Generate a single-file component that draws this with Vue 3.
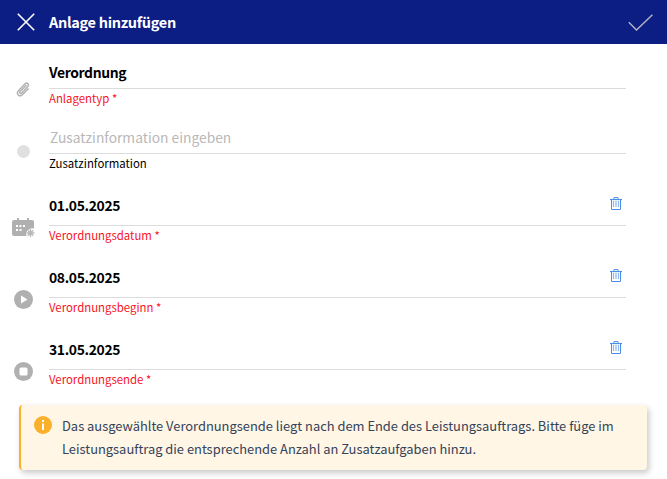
<script setup>
const dates = [
  { value: '01.05.2025', label: 'Verordnungsdatum', icon: 'cal' },
  { value: '08.05.2025', label: 'Verordnungsbeginn', icon: 'play' },
  { value: '31.05.2025', label: 'Verordnungsende', icon: 'stop' }
]
</script>

<template>
  <div class="page">
    <header class="bar">
      <svg class="close" width="18" height="18" viewBox="0 0 18 18"><path d="M.8.8 17.200 17.200M17.200.8.8 17.200" stroke="#fff" stroke-width="1.600" fill="none"/></svg>
      <h1>Anlage hinzufügen</h1>
      <svg class="check" width="25" height="17" viewBox="0 0 25 17"><path d="M.8 8.300 8.500 16 24.400.8" stroke="#b0b2c0" stroke-width="1.500" fill="none"/></svg>
    </header>

    <main class="form">
      <section class="row first">
        <div class="ico">
          <svg width="15" height="16" viewBox="0 0 16 17"><path d="M11.200 3.200 4.400 10.200C3.300 11.400 4.600 13 5.900 11.900L12.600 4.800C14.600 2.600 11.800-.2 9.700 1.900L2.600 9.200C-.4 12.400 3.600 16.600 6.800 13.600L13.400 6.800" fill="none" stroke="#b0b0b0" stroke-width="1.500"/></svg>
        </div>
        <div class="field">
          <div class="value h1">Verordnung</div>
          <div class="label req">Anlagentyp *</div>
        </div>
      </section>

      <section class="row second">
        <div class="ico"><span class="dot"></span></div>
        <div class="field">
          <div class="value ph">Zusatzinformation eingeben</div>
          <div class="label">Zusatzinformation</div>
        </div>
      </section>

      <section v-for="d in dates" :key="d.label" class="row date">
        <div class="ico">
          <svg v-if="d.icon === 'cal'" width="24" height="20" viewBox="0 0 24 20">
            <path d="M2 2h3V0h2v2h8V0h2v2h3a2 2 0 0 1 2 2v6.500a6 6 0 0 0-7.500 7.500H2a2 2 0 0 1-2-2V4a2 2 0 0 1 2-2z" fill="#b0b0b0"/>
            <path d="M4 7h2v2H4zM7.500 7h2v2h-2zM11 7h2v2h-2zM4 11h2v2H4zM7.500 11h2v2h-2z" fill="#fff"/>
            <path d="M18.500 11v8M14.500 15h8M15.700 12.200l5.600 5.600M21.300 12.200l-5.600 5.600" stroke="#b8b8b8" stroke-width="1.300"/>
          </svg>
          <svg v-else width="19" height="19" viewBox="0 0 19 19">
            <circle cx="9.500" cy="9.500" r="9.500" fill="#b0b0b0"/>
            <path v-if="d.icon === 'play'" d="M7 5.500 13.500 9.500 7 13.500z" fill="#fff"/>
            <rect v-else x="5.500" y="5.500" width="8" height="8" rx="1.500" fill="#fff"/>
          </svg>
        </div>
        <div class="field">
          <div class="value h2">
            <span>{{ d.value }}</span>
            <svg class="trash" width="12" height="13" viewBox="0 0 12 13">
              <path d="M4 2V.5h4V2" fill="none" stroke="#5c9ae8" stroke-width="1"/>
              <path d="M0 2.500h12" stroke="#4e8fe6" stroke-width="1.200"/>
              <path d="M1.500 3v9.500h9V3" fill="#fff" stroke="#4e8fe6" stroke-width="1"/>
              <path d="M3.500 3.500v6.500M6 3.500v6.500M8.500 3.500v6.500" stroke="#8fbcf0" stroke-width="1.300"/>
            </svg>
          </div>
          <div class="label req">{{ d.label }} *</div>
        </div>
      </section>

      <aside class="alert">
        <svg width="18" height="18" viewBox="0 0 18 18"><circle cx="9" cy="9" r="9" fill="#fbb02b"/><rect x="8" y="7.500" width="2" height="6.500" fill="#fff"/><rect x="8" y="4" width="2" height="2" fill="#fff"/></svg>
        <p>Das ausgewählte Verordnungsende liegt nach dem Ende des Leistungsauftrags. Bitte füge im Leistungsauftrag die entsprechende Anzahl an Zusatzaufgaben hinzu.</p>
      </aside>
    </main>
  </div>
</template>

<style>
html, body { margin: 0; background: #fff; }
</style>

<style scoped>
.page {
  width: 667px;
  height: 479px;
  overflow: hidden;
  font-family: "Noto Sans CJK SC", "Noto Sans", sans-serif;
}
.bar {
  height: 44px;
  background: #0c1d84;
  display: flex;
  align-items: center;
  padding: 0 14px 0 17px;
  box-sizing: border-box;
}
.close { flex: none; }
h1 {
  margin: 0 0 0 14px;
  flex: 1;
  font-size: 14.500px;
  font-weight: 700;
  letter-spacing: -.3px;
  line-height: 20px;
  color: #fff;
}
.check { flex: none; }
.row { display: flex; box-sizing: border-box; }
.first { height: 66px; padding-top: 16px; }
.second { height: 66px; padding-top: 15px; }
.date { height: 72px; padding-top: 18px; }
.ico {
  width: 49px;
  flex: none;
  display: flex;
  justify-content: center;
  align-items: flex-start;
  padding-right: 2px;
  box-sizing: border-box;
}
.first .ico { padding-top: 22px; }
.second .ico { padding-top: 20px; }
.date .ico { padding-top: 24px; }
.field { width: 577px; }
.value {
  height: 24px;
  line-height: 22px;
  font-size: 13.900px;
  color: #000;
  border-bottom: 1px solid #dcdcdc;
  box-sizing: content-box;
}
.h1, .ph { padding-bottom: 3px; padding-top: 1px; }
.h1 { font-weight: 700; letter-spacing: -.35px; }
.ph { color: #b8b8b8; font-size: 13.800px; padding-left: 1px; padding-bottom: 3px; box-sizing: content-box; }
.h2 {
  padding-bottom: 7px;
  font-weight: 700;
  letter-spacing: -.35px;
  display: flex;
  justify-content: space-between;
  align-items: flex-start;
}
.trash { margin: 3px 4px 0 0; }
.label {
  font-size: 11.400px;
  line-height: 18px;
  color: #000;
}
.req { color: #f8131f; }
.dot {
  display: block;
  width: 13px;
  height: 13px;
  border-radius: 50%;
  background: #e0e0e0;
}
.alert {
  margin: 13px 0 0 19px;
  width: 628px;
  height: 65px;
  box-sizing: border-box;
  background: #fff6e5;
  border-left: 2px solid #fbb02b;
  border-radius: 4px;
  box-shadow: 2px 3px 6px rgba(0, 0, 0, .22);
  display: flex;
  gap: 10px;
  padding: 9px 8px 0 13px;
}
.alert svg { flex: none; margin-top: 2px; }
.alert p {
  margin: 0;
  font-size: 12.900px;
  line-height: 23px;
  color: #34435a;
}
</style>
